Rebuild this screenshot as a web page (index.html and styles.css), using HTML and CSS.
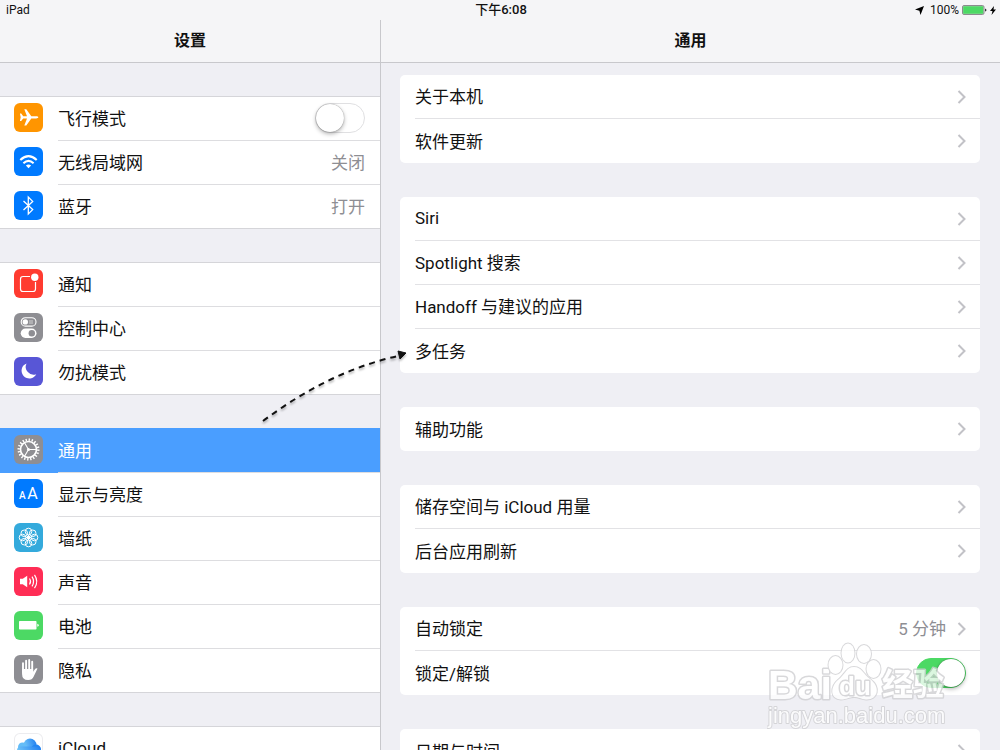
FILE: index.html
```
<!DOCTYPE html>
<html lang="zh-CN">
  <head>
    <meta charset="utf-8">
    <title>设置</title>
    <link rel="stylesheet" href="styles.css">
  </head>

  <body>
    <div class="statusbar">
      <div class="device">iPad</div>
      <div class="time">下午6:08</div>
      <div class="power">
        <svg class="location" viewBox="0 0 9 9"><path d="M9 0L5.500 9L4.400 4.700L0 3.600Z"/></svg>
        <span>100%</span>
        <svg class="battery" viewBox="0 0 25 10">
          <rect x="0.500" y="0.500" width="21.500" height="9" rx="1.500" fill="#c8c8ca" stroke="#8b8b8e"/>
          <rect x="1.200" y="1.200" width="20" height="7.600" rx="0.500" fill="#4cd964"/>
          <path d="M23 3.500Q24.500 4 24.500 5T23 6.500Z" fill="#333"/>
        </svg>
        <svg class="bolt" viewBox="0 0 6 9"><path d="M4 0L0 5H2.500L1.500 9L6 3.600H3.500Z"/></svg>
      </div>
    </div>

    <div class="panes">
      <nav class="sidebar">
        <h1 class="title">设置</h1>

        <div class="group">
          <div class="row">
            <svg class="icon orange" viewBox="0 0 29 29"><path fill="#fff" d="M24.300 14.300C24.300 13.500 23.300 13.200 22.200 13.200H17.300L12.300 6.200H10.300L13 13.200H9.200L7.200 10.500H5.900L6.700 14.300L5.900 18.100H7.200L9.200 15.400H13L10.300 22.400H12.300L17.300 15.400H22.200C23.300 15.400 24.300 15.100 24.300 14.300Z"/></svg>
            <div class="line">
              <label for="airplane">飞行模式</label>
              <input type="checkbox" id="airplane" class="switch">
            </div>
          </div>
          <a href="#wifi" class="row">
            <svg class="icon blue" viewBox="0 0 29 29">
              <g fill="none" stroke="#fff" stroke-width="2.100"><path d="M6.300 13Q14.500 5.300 22.700 13"/><path d="M9.400 16.200Q14.500 11.600 19.600 16.200"/></g>
              <path fill="#fff" d="M11.900 18.600Q14.500 16.500 17.100 18.600L14.500 21.300Z"/>
            </svg>
            <div class="line"><span>无线局域网</span><span class="value">关闭</span></div>
          </a>
          <a href="#bluetooth" class="row">
            <svg class="icon blue" viewBox="0 0 29 29"><path fill="none" stroke="#fff" stroke-width="1.300" d="M9.500 10L18.700 18.600L14.300 22.900V6.100L18.700 10.400L9.500 19"/></svg>
            <div class="line"><span>蓝牙</span><span class="value">打开</span></div>
          </a>
        </div>

        <div class="group">
          <a href="#notifications" class="row">
            <svg class="icon red" viewBox="0 0 29 29">
              <path fill="none" stroke="#fff" stroke-width="1.200" d="M16 7.500H9Q6.500 7.500 6.500 10V20Q6.500 22.500 9 22.500H19Q21.500 22.500 21.500 20V13"/>
              <circle cx="20.800" cy="8.300" r="3.700" fill="#fff"/>
            </svg>
            <div class="line"><span>通知</span></div>
          </a>
          <a href="#control" class="row">
            <svg class="icon gray" viewBox="0 0 29 29">
              <rect x="7.200" y="4.700" width="14.800" height="8.400" rx="4.200" fill="none" stroke="#fff" stroke-width="1.100"/>
              <circle cx="11.300" cy="8.900" r="2.700" fill="#fff"/><path d="M15 9H19" stroke="#fff" stroke-opacity="0.300" stroke-width="4"/>
              <rect x="6.700" y="15.600" width="15.800" height="9.400" rx="4.700" fill="#fff"/>
              <circle cx="17.800" cy="20.300" r="3.200" fill="#8e8e93"/>
            </svg>
            <div class="line"><span>控制中心</span></div>
          </a>
          <a href="#dnd" class="row">
            <svg class="icon purple" viewBox="0 0 29 29"><path fill="#fff" d="M12.500 6.400A7.800 7.800 0 1 0 22.300 17.200A7.900 7.900 0 0 1 12.500 6.400Z"/></svg>
            <div class="line"><span>勿扰模式</span></div>
          </a>
        </div>

        <div class="group">
          <a href="#general" class="row selected">
            <svg class="icon gray" viewBox="0 0 29 29">
              <g fill="none" stroke="#fff">
                <circle cx="14.500" cy="14.500" r="9.800" stroke-width="2.400" stroke-dasharray="1.350 1.716"/>
                <circle cx="14.500" cy="14.500" r="8" stroke-width="1.700"/>
                <path stroke-width="1.100" d="M14.500 14.500H22M14.500 14.500L10.700 8M14.500 14.500L10.700 21"/>
              </g>
              <circle cx="14.500" cy="14.500" r="1.500" fill="#fff"/>
            </svg>
            <div class="line"><span>通用</span></div>
          </a>
          <a href="#display" class="row">
            <svg class="icon blue" viewBox="0 0 29 29"><text x="5" y="19.500" class="small-a">A</text><text x="13.300" y="19.500" class="big-a">A</text></svg>
            <div class="line"><span>显示与亮度</span></div>
          </a>
          <a href="#wallpaper" class="row">
            <svg class="icon cyan" viewBox="0 0 29 29">
              <g fill="none" stroke="#fff" stroke-width="1">
                <circle cx="14.500" cy="8.500" r="3.300"/><circle cx="18.700" cy="10.300" r="3.300"/>
                <circle cx="20.500" cy="14.500" r="3.300"/><circle cx="18.700" cy="18.700" r="3.300"/>
                <circle cx="14.500" cy="20.500" r="3.300"/><circle cx="10.300" cy="18.700" r="3.300"/>
                <circle cx="8.500" cy="14.500" r="3.300"/><circle cx="10.300" cy="10.300" r="3.300"/>
                <path d="M14.500 12V17M12 14.500H17M12.700 12.700L16.300 16.300M16.300 12.700L12.700 16.300"/>
              </g>
            </svg>
            <div class="line"><span>墙纸</span></div>
          </a>
          <a href="#sounds" class="row">
            <svg class="icon pink" viewBox="0 0 29 29">
              <path fill="#fff" d="M6 11.700H8.800L13.200 8.700V20.300L8.800 17.300H6Z"/>
              <g fill="none" stroke="#fff" stroke-width="1.200"><path d="M15.500 11.500Q17.600 14.500 15.500 17.500"/><path d="M18 9.700Q21.200 14.500 18 19.300"/><path d="M20.500 7.900Q25 14.500 20.500 21.100"/></g>
            </svg>
            <div class="line"><span>声音</span></div>
          </a>
          <a href="#battery" class="row">
            <svg class="icon green" viewBox="0 0 29 29"><rect x="5" y="10" width="17.500" height="8.500" rx="0.800" fill="#fff"/><path fill="#fff" d="M23.300 12.700Q24.700 13 24.700 14.300T23.300 15.800Z"/></svg>
            <div class="line"><span>电池</span></div>
          </a>
          <a href="#privacy" class="row">
            <svg class="icon gray" viewBox="0 0 29 29">
              <g fill="none" stroke="#fff" stroke-width="1.900" stroke-linecap="round"><path d="M9 8.300V17M12.100 5.700V15M15.200 5V15M18.200 6.700V16"/></g>
              <path fill="#fff" d="M8.050 14H19.150V16.800L21.300 13.700Q22.400 12.700 23.500 13.500L19.700 21.500Q18.200 25 14.200 25Q8.050 25 8.050 19Z"/>
            </svg>
            <div class="line"><span>隐私</span></div>
          </a>
        </div>

        <div class="group">
          <a href="#icloud" class="row">
            <svg class="icon white" viewBox="0 0 29 29">
              <defs>
                <linearGradient id="sky" x1="0" x2="1" y1="0.300" y2="0"><stop offset="0" stop-color="#6fc3f8"/><stop offset="1" stop-color="#1d7cf0"/></linearGradient>
              </defs>
              <circle cx="16" cy="12" r="6.500" fill="url(#sky)"/><circle cx="8.500" cy="14" r="4.500" fill="#64bdf7"/>
              <circle cx="22" cy="16.500" r="5" fill="#2385f2"/><rect x="3" y="13.500" width="24" height="8" rx="4" fill="url(#sky)"/>
            </svg>
            <div class="line"><span>iCloud</span></div>
          </a>
        </div>
      </nav>

      <main class="content">
        <h2 class="title">通用</h2>

        <div class="cards">
          <div class="card">
            <a href="#about" class="item">关于本机<svg class="chevron" viewBox="0 0 9 14"><path d="M1.500 1L7.500 7L1.500 13"/></svg></a>
            <a href="#update" class="item">软件更新<svg class="chevron" viewBox="0 0 9 14"><path d="M1.500 1L7.500 7L1.500 13"/></svg></a>
          </div>

          <div class="card">
            <a href="#siri" class="item">Siri<svg class="chevron" viewBox="0 0 9 14"><path d="M1.500 1L7.500 7L1.500 13"/></svg></a>
            <a href="#spotlight" class="item">Spotlight 搜索<svg class="chevron" viewBox="0 0 9 14"><path d="M1.500 1L7.500 7L1.500 13"/></svg></a>
            <a href="#handoff" class="item">Handoff 与建议的应用<svg class="chevron" viewBox="0 0 9 14"><path d="M1.500 1L7.500 7L1.500 13"/></svg></a>
            <a href="#multitasking" class="item">多任务<svg class="chevron" viewBox="0 0 9 14"><path d="M1.500 1L7.500 7L1.500 13"/></svg></a>
          </div>

          <div class="card">
            <a href="#accessibility" class="item">辅助功能<svg class="chevron" viewBox="0 0 9 14"><path d="M1.500 1L7.500 7L1.500 13"/></svg></a>
          </div>

          <div class="card">
            <a href="#storage" class="item">储存空间与 iCloud 用量<svg class="chevron" viewBox="0 0 9 14"><path d="M1.500 1L7.500 7L1.500 13"/></svg></a>
            <a href="#refresh" class="item">后台应用刷新<svg class="chevron" viewBox="0 0 9 14"><path d="M1.500 1L7.500 7L1.500 13"/></svg></a>
          </div>

          <div class="card">
            <a href="#autolock" class="item">自动锁定<span class="value">5 分钟</span><svg class="chevron" viewBox="0 0 9 14"><path d="M1.500 1L7.500 7L1.500 13"/></svg></a>
            <div class="item">
              <label for="lock">锁定/解锁</label>
              <input type="checkbox" id="lock" class="switch" checked>
            </div>
          </div>

          <div class="card">
            <a href="#date" class="item">日期与时间<svg class="chevron" viewBox="0 0 9 14"><path d="M1.500 1L7.500 7L1.500 13"/></svg></a>
          </div>
        </div>
      </main>
    </div>

    <svg class="arrow" viewBox="0 0 150 80">
      <path d="M3 71Q70 21 138 6" fill="none" stroke="#111" stroke-width="2" stroke-dasharray="6 5"/>
      <path d="M146 3L138 1L140 9Z" fill="#111" stroke="#111"/>
    </svg>

    <svg class="watermark" viewBox="0 0 190 90">
      <text x="1" y="57" class="bai">Bai</text>
      <g class="paw">
        <ellipse cx="68.500" cy="23" rx="7" ry="9"/><ellipse cx="81" cy="11" rx="6.500" ry="9.500"/>
        <ellipse cx="97" cy="12" rx="7" ry="9"/><ellipse cx="106.500" cy="27" rx="7" ry="9"/>
        <path d="M87 25C95 25 96 32 103 37C114 45 111 58 99 57.500C94 57 92 55 87 55C82 55 80 57.500 74 57.500C63 57 63 45 71 38C78 33 79 25 87 25Z"/>
      </g>
      <text x="72" y="53" class="du">du</text>
      <text x="115" y="53" class="jingyan">经验</text>
      <text x="1" y="81" class="site">jingyan.baidu.com</text>
    </svg>
  </body>
</html>
```
FILE: styles.css
```
* {
  box-sizing: border-box;
}

body {
  margin: 0;
  height: 100vh;
  overflow: hidden;
  position: relative;
  background-color: #efeff4;
  color: #111;
  font-family: Roboto, "Noto Sans CJK SC", sans-serif;
  font-size: 17px;
}

a {
  color: inherit;
  text-decoration: none;
}

.statusbar {
  display: grid;
  grid-template-columns: 1fr auto 1fr;
  align-items: center;
  height: 20px;
  padding: 0 4px 0 6px;
  background-color: #f5f5f7;
  font-size: 12px;
  line-height: 18px;
}

.time {
  font-size: 13px;
  font-weight: 500;
}

.power {
  display: flex;
  align-items: center;
  justify-content: flex-end;
  gap: 3px;
}

.location {
  width: 9px;
  height: 9px;
  margin-right: 3px;
}

.battery {
  width: 25px;
  height: 10px;
}

.bolt {
  width: 6px;
  height: 9px;
}

.panes {
  display: flex;
}

.sidebar {
  width: 380px;
  flex-shrink: 0;
  box-shadow: 1px 0 #c8c8cc;
}

.content {
  flex: 1;
  margin-left: 1px;
}

.title {
  height: 43px;
  margin: 0;
  background-color: #f5f5f7;
  border-bottom: 1px solid #c8c8cc;
  font-size: 16px;
  font-weight: 700;
  line-height: 42px;
  text-align: center;
}

.group {
  margin-top: 33px;
  border-top: 1px solid #d5d5d9;
  background-color: white;
}

.row {
  display: flex;
  align-items: flex-start;
  gap: 15px;
  height: 44px;
  padding-left: 14px;
}

.row:last-child {
  border-bottom: 1px solid #d5d5d9;
}

.icon {
  width: 29px;
  height: 29px;
  margin-top: 6px;
  border-radius: 6px;
  flex-shrink: 0;
}

.line {
  display: flex;
  flex: 1;
  align-items: center;
  justify-content: space-between;
  height: 44px;
  padding: 0 15px 3px 0;
  border-bottom: 1px solid #dddde0;
}

.row:last-child .line {
  border-bottom: none;
}

.selected {
  background-color: #4a9eff;
  box-shadow: 0 -1px #4a9eff;
  color: white;
}

.value {
  color: #8e8e93;
}

.orange { background-color: #ff9500; }
.blue { background-color: #007aff; }
.red { background-color: #ff3b30; }
.gray { background-color: #8e8e93; }
.purple { background-color: #5856d6; }
.cyan { background-color: #34aadc; }
.pink { background-color: #ff2d55; }
.green { background-color: #4cd964; }

.white {
  background-color: white;
  box-shadow: inset 0 0 0 1px #ececef;
}

.small-a,
.big-a {
  fill: white;
  font-family: Roboto, sans-serif;
  font-size: 10px;
  font-weight: 500;
}

.big-a {
  font-size: 16px;
  font-weight: 400;
}

.switch {
  appearance: none;
  flex-shrink: 0;
  width: 50px;
  height: 30px;
  margin: 2px 0 0;
  border: 1px solid #e0e0e2;
  border-radius: 15px;
  background-color: white;
}

.switch::before {
  content: "";
  display: block;
  width: 28px;
  height: 28px;
  border-radius: 50%;
  background-color: white;
  box-shadow: 0 2px 4px rgba(0, 0, 0, 0.3), 0 0 1px rgba(0, 0, 0, 0.5);
}

.switch:checked {
  border-color: #4cd964;
  background-color: #4cd964;
}

.switch:checked::before {
  margin-left: 20px;
}

.cards {
  display: flex;
  flex-direction: column;
  gap: 34px;
  padding: 12px 20px 0 19px;
}

.card {
  padding-left: 15px;
  border-radius: 5px;
  background-color: white;
}

.item {
  display: flex;
  align-items: center;
  height: 44px;
  padding: 0 14px 2px 0;
  border-bottom: 1px solid #e2e2e5;
}

.item:last-child {
  border-bottom: none;
}

.item .value,
.item .chevron,
.item .switch {
  margin-left: auto;
}

.item .value + .chevron {
  margin-left: 11px;
}

.chevron {
  width: 9px;
  height: 14px;
  margin-top: 2px;
  fill: none;
  stroke: #c2c2c7;
  stroke-width: 2;
}

.arrow {
  position: absolute;
  left: 260px;
  top: 350px;
  width: 150px;
  height: 80px;
  filter: drop-shadow(0 2px 1px rgba(0, 0, 0, 0.3));
  pointer-events: none;
}

.watermark {
  position: absolute;
  left: 767px;
  top: 642px;
  width: 190px;
  height: 90px;
  fill: white;
  stroke: #cfcfd2;
  stroke-width: 3px;
  stroke-linejoin: round;
  paint-order: stroke;
  opacity: 0.8;
  font-family: "Liberation Sans", "Noto Sans CJK SC", sans-serif;
  pointer-events: none;
}

.bai {
  font-size: 41px;
  font-weight: 700;
}

.paw {
  stroke-width: 2px;
}

.du {
  font-size: 26px;
  font-weight: 700;
}

.jingyan {
  font-size: 31px;
  font-weight: 700;
}

.site {
  font-size: 22px;
  stroke-width: 2px;
}
```
